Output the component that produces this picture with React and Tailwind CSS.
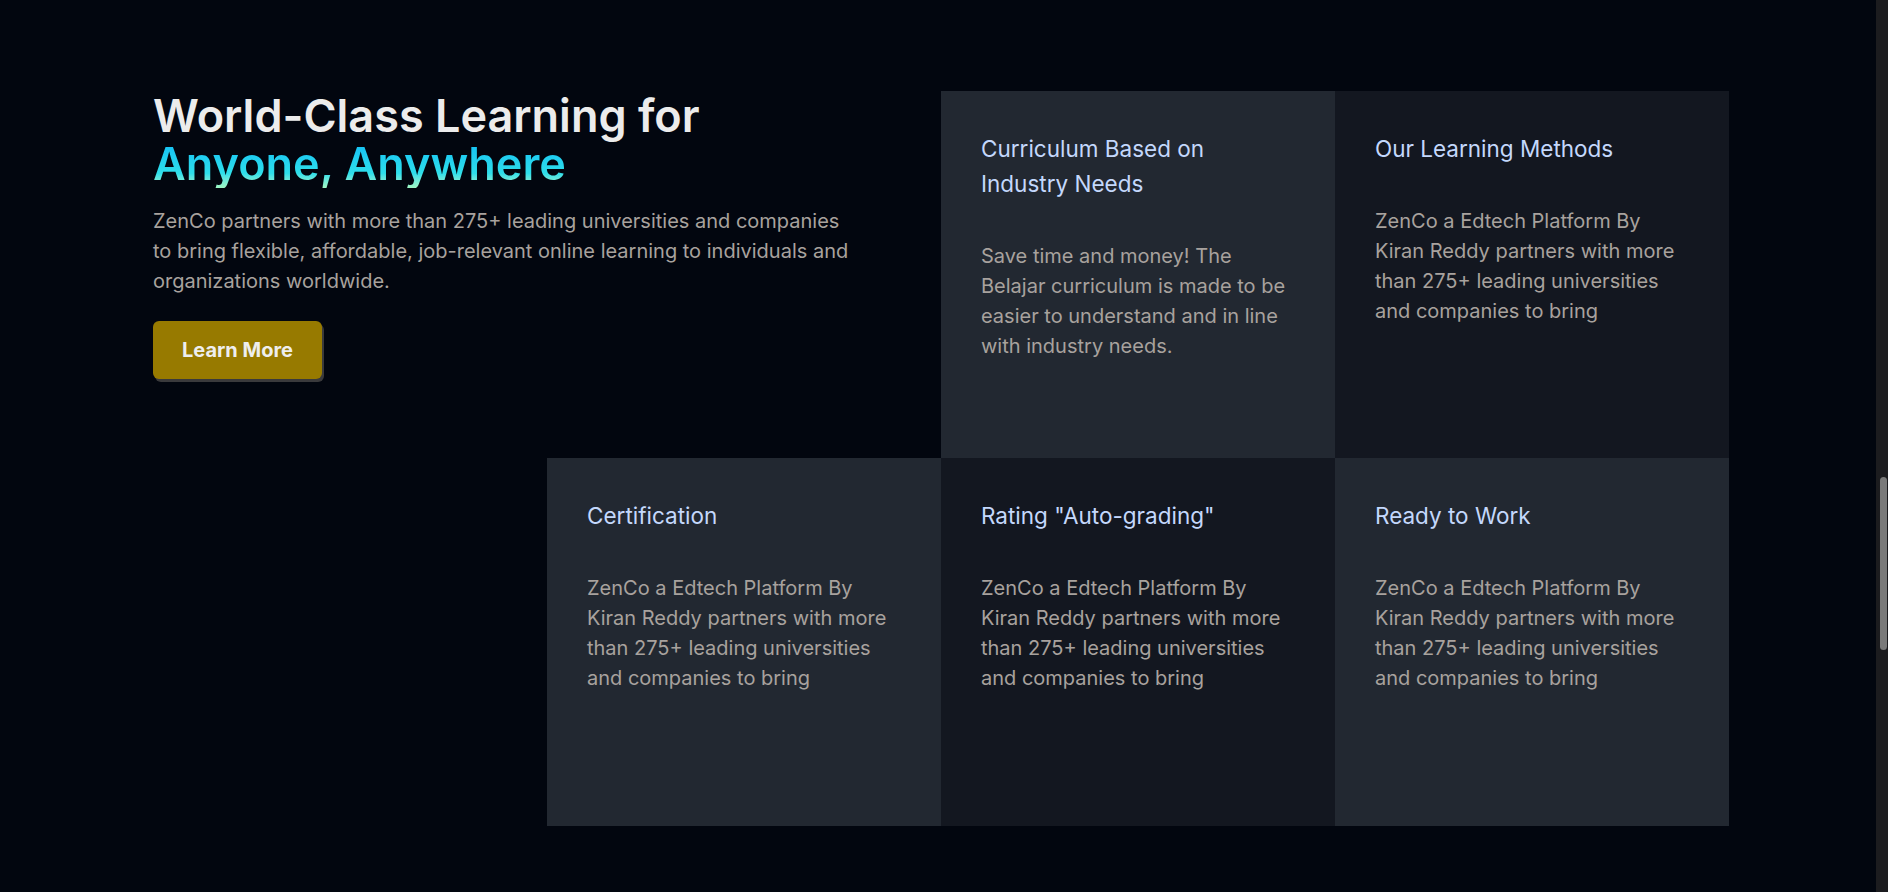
export default function App() {
  const body =
    "ZenCo a Edtech Platform By Kiran Reddy partners with more than 275+ leading universities and companies to bring";
  const Card = ({ title, text, dark }) => (
    <div className={(dark ? "bg-[#131720]" : "bg-[#222831]") + " px-10 pt-10"}>
      <h3 className="text-[22.5px] leading-[35px] text-[#c4d8fc] font-normal">{title}</h3>
      <p className="mt-10 text-[20px] leading-[30px] text-[#a8a29e]">{text}</p>
    </div>
  );
  return (
    <div className="flex min-h-screen bg-[#02060f] font-['Inter','Noto_Sans',sans-serif]">
      <main className="flex-1">
        <section className="pt-[91px] pb-[66px] pl-[153px]">
          <div className="grid grid-cols-[repeat(4,394px)] grid-rows-[367px_368px]">
            <div className="col-span-2 pt-[1px]">
              <h2 className="text-[45px] leading-[48px] font-semibold text-[#ececec]">
                <span className="block">World-Class Learning for</span>
                <span className="block w-fit bg-linear-to-b from-[#10bdf6] via-[#2fdfea] via-70% to-[#9ff7c2] bg-clip-text text-transparent">
                  Anyone, Anywhere
                </span>
              </h2>
              <p className="mt-[18px] max-w-[705px] text-[20px] leading-[30px] text-[#a8a29e]">
                ZenCo partners with more than 275+ leading universities and companies to bring
                flexible, affordable, job-relevant online learning to individuals and organizations
                worldwide.
              </p>
              <button className="mt-[25px] h-[58px] w-[169px] rounded-md bg-[#977a00] text-[20px] font-bold text-[#eeeeee] shadow-[2px_3px_0_#3a3a3c]">
                Learn More
              </button>
            </div>
            <Card
              title="Curriculum Based on Industry Needs"
              text="Save time and money! The Belajar curriculum is made to be easier to understand and in line with industry needs."
            />
            <Card title="Our Learning Methods" text={body} dark />
            <div />
            <Card title="Certification" text={body} />
            <Card title={'Rating "Auto-grading"'} text={body} dark />
            <Card title="Ready to Work" text={body} />
          </div>
        </section>
      </main>
      <div className="w-[12px] shrink-0 bg-[#1c1c1f] pt-[477px] pl-[4px] pr-[1px]">
        <div className="h-[173px] rounded-full bg-[#7a7a7a]" />
      </div>
    </div>
  );
}
